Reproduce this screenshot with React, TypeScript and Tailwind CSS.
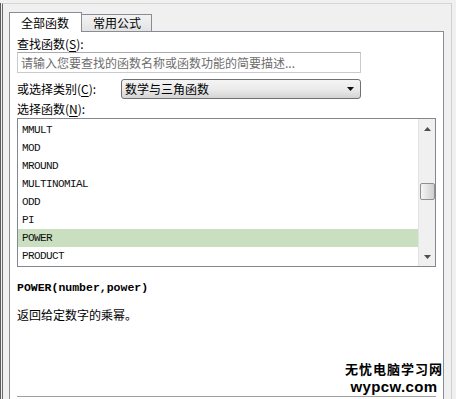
const cjk = "font-['Noto_Sans_CJK_SC','Noto_Sans',sans-serif]";
const mono = "font-['Liberation_Mono',monospace]";

const functions = [
  "MMULT",
  "MOD",
  "MROUND",
  "MULTINOMIAL",
  "ODD",
  "PI",
  "POWER",
  "PRODUCT",
];

const selected = "POWER";

function ArrowUp() {
  return (
    <svg width="7" height="4" viewBox="0 0 7 4">
      <path d="M0 4 L3.5 0 L7 4 Z" fill="#4d4d4d" />
    </svg>
  );
}

function ArrowDown({ color = "#4d4d4d" }: { color?: string }) {
  return (
    <svg width="7" height="4" viewBox="0 0 7 4">
      <path d="M0 0 L7 0 L3.5 4 Z" fill={color} />
    </svg>
  );
}

function Scrollbar() {
  return (
    <div className="flex w-[17px] flex-col items-center border-l border-[#e3e3e3] bg-[#f0f0f0]">
      <div className="flex h-[17px] w-full items-center justify-center pt-[3px]">
        <ArrowUp />
      </div>
      <div className="mt-[47px] h-[17px] w-[15px] rounded-[2px] border border-[#8e8f8f] bg-gradient-to-r from-[#f6f6f6] to-[#cfcfcf]" />
      <div className="flex-1" />
      <div className="flex h-[17px] w-full items-center justify-center pb-[2px]">
        <ArrowDown />
      </div>
    </div>
  );
}

export default function App() {
  return (
    <div className={`relative h-[399px] w-[456px] overflow-hidden bg-[#f0f0f0] ${cjk} text-[12px] text-black`}>
      <div className="ml-0 h-[399px] border-l border-[#5a5a5a] pl-[1px]">
        <div className="mt-[3px] h-[396px] w-[450px] border-l border-r border-t border-l-[#6a6a6a] border-r-[#cfcfcf] border-t-[#d6d6d6] pl-[6px] pt-[8px]">
          {/* tabs */}
          <div className="flex h-[19px] items-end">
            <div className="relative z-10 mb-[-1px] flex h-[20px] w-[73px] items-center border-l border-r border-t border-[#898c95] bg-white pl-[11px] leading-none">
              全部函数
            </div>
            <div className="flex h-[17px] w-[70px] items-center border-r border-t border-[#898c95] bg-gradient-to-b from-[#f3f3f3] to-[#e3e3e3] pl-[11px] leading-none">
              常用公式
            </div>
          </div>

          {/* panel */}
          <div className="h-[400px] w-[435px] border border-[#898c95] bg-white pl-[7px] pt-[4px]">
            <div className="h-[16px] leading-[16px]">
              查找函数(<span className="underline underline-offset-2">S</span>):
            </div>
            <div className="flex h-[21px] w-[344px] items-center border border-[#c9cbd0] border-t-[#a9abb1] pl-[3px] text-[#6d6d6d]">
              请输入您要查找的函数名称或函数功能的简要描述...
            </div>

            <div className="mt-[6px] flex h-[20px] items-center">
              <div className="w-[104px]">
                或选择类别(<span className="underline underline-offset-2">C</span>):
              </div>
              <div className="flex h-[20px] w-[240px] items-center justify-between rounded-[3px] border border-[#707070] bg-gradient-to-b from-[#f4f4f4] via-[#ebebeb] to-[#d4d4d4] pl-[3px] pr-[6px]">
                <span>数学与三角函数</span>
                <ArrowDown color="#111" />
              </div>
            </div>

            <div className="mt-[2px] h-[16px] leading-[16px]">
              选择函数(<span className="underline underline-offset-2">N</span>):
            </div>

            <div className="mt-[1px] flex h-[149px] w-[419px] border border-[#828790]">
              <div className="flex-1 pt-[2px]">
                {functions.map((name) => (
                  <div
                    key={name}
                    className={`flex h-[18px] items-center pl-[4px] ${mono} text-[11px] tracking-[-0.6px] text-[#111] ${
                      name === selected ? "bg-[#c9dfc0]" : ""
                    }`}
                  >
                    {name}
                  </div>
                ))}
              </div>
              <Scrollbar />
            </div>

            <div className={`mt-[13px] h-[16px] leading-[16px] ${mono} text-[11.5px] font-bold`}>
              POWER(number,power)
            </div>
            <div className="mt-[11px] h-[16px] leading-[16px]">返回给定数字的乘幂。</div>

            <div className="mt-[73px] w-[419px] border-t border-[#a0a0a0]" />
          </div>
        </div>
      </div>

      {/* site watermark */}
      <div className="absolute left-[345px] top-[362px] flex flex-col items-center">
        <span className="h-[13px] text-[13px] font-bold leading-[13px] tracking-[1px]">无忧电脑学习网</span>
        <span className="mt-[4px] h-[15px] font-['Liberation_Sans',sans-serif] text-[15px] font-bold leading-[15px] tracking-[0.4px]">
          wypcw.com
        </span>
      </div>
    </div>
  );
}
